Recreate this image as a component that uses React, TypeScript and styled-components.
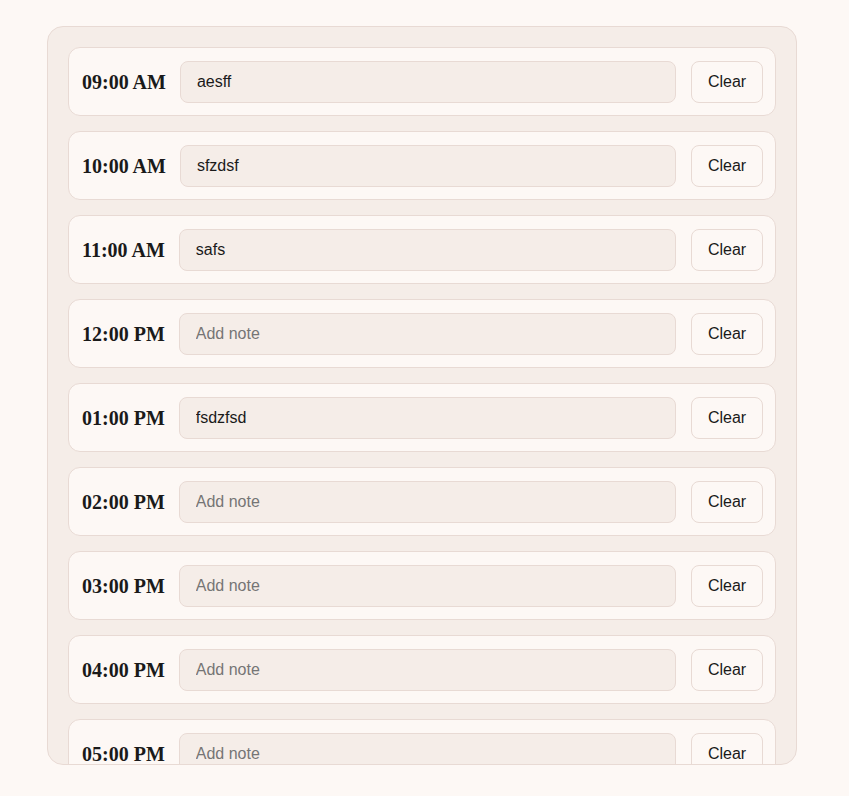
import * as React from "react";
import styled, { createGlobalStyle } from "styled-components";

const GlobalStyle = createGlobalStyle`
	html, body {
		margin: 0;
		padding: 0;
		background: #fdf8f5;
	}
	body {
		font-family: "Liberation Sans", Arial, sans-serif;
	}
`;

const Page = styled.div`
	padding: 26px 0 0 47px;
`;

const Planner = styled.div`
	box-sizing: border-box;
	width: 750px;
	height: 739px;
	overflow: hidden;
	background: #f5ede8;
	border: 1px solid #e8dad4;
	border-radius: 16px;
	padding: 20px 20px 0;
	display: flex;
	flex-direction: column;
	gap: 15px;
`;

const SlotRow = styled.div`
	box-sizing: border-box;
	flex: 0 0 69px;
	display: flex;
	align-items: center;
	padding: 13px 12px 12px 13px;
	background: #fdf8f5;
	border: 1px solid #e8dad4;
	border-radius: 12px;
`;

const TimeLabel = styled.span`
	flex: 0 0 auto;
	font-family: "Liberation Serif", "Times New Roman", serif;
	font-weight: bold;
	font-size: 20px;
	color: #1a1a1a;
`;

const NoteInput = styled.input`
	box-sizing: border-box;
	flex: 1;
	min-width: 0;
	height: 42px;
	margin-left: 14px;
	padding: 0 16px;
	background: #f5ede8;
	border: 1px solid #e8dad4;
	border-radius: 8px;
	font-family: "Liberation Sans", Arial, sans-serif;
	font-size: 16px;
	color: #1a1a1a;
	outline: none;
	&::placeholder {
		color: #757575;
	}
`;

const ClearButton = styled.button`
	box-sizing: border-box;
	flex: 0 0 72px;
	height: 42px;
	margin-left: 15px;
	background: #fdf8f5;
	border: 1px solid #e8dad4;
	border-radius: 8px;
	font-family: "Liberation Sans", Arial, sans-serif;
	font-size: 16px;
	color: #1a1a1a;
	cursor: pointer;
`;

const initialSlots = [
	{ time: "09:00 AM", note: "aesff" },
	{ time: "10:00 AM", note: "sfzdsf" },
	{ time: "11:00 AM", note: "safs" },
	{ time: "12:00 PM", note: "" },
	{ time: "01:00 PM", note: "fsdzfsd" },
	{ time: "02:00 PM", note: "" },
	{ time: "03:00 PM", note: "" },
	{ time: "04:00 PM", note: "" },
	{ time: "05:00 PM", note: "" }
];

export default function App() {
	const [slots, setSlots] = React.useState(initialSlots);

	const setNote = (i: number, note: string) =>
		setSlots(s => s.map((x, j) => (j === i ? { ...x, note } : x)));

	return (
		<Page>
			<GlobalStyle />
			<Planner>
				{slots.map((s, i) => (
					<SlotRow key={s.time}>
						<TimeLabel>{s.time}</TimeLabel>
						<NoteInput
							value={s.note}
							placeholder="Add note"
							onChange={e => setNote(i, e.target.value)}
						/>
						<ClearButton onClick={() => setNote(i, "")}>Clear</ClearButton>
					</SlotRow>
				))}
			</Planner>
		</Page>
	);
}
